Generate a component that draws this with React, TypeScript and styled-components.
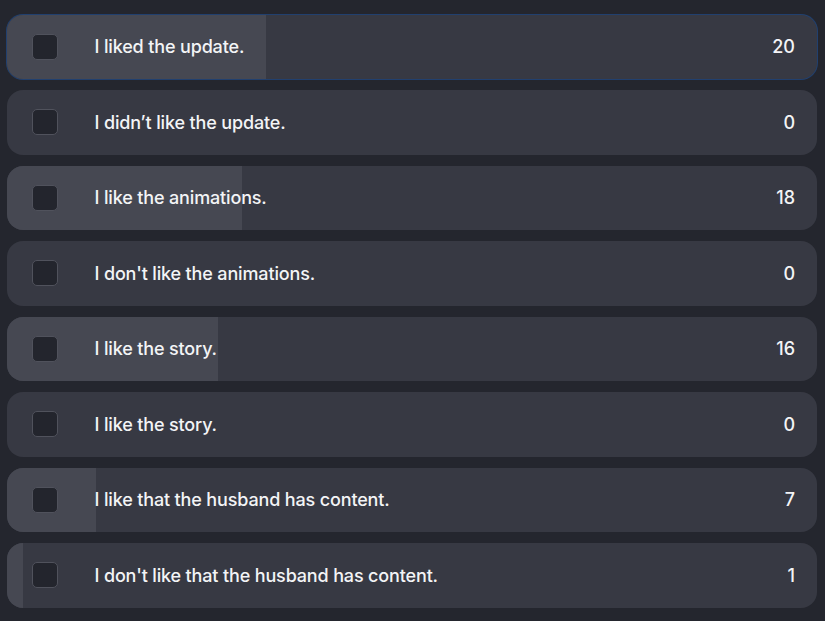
import React from "react";
import styled, { createGlobalStyle } from "styled-components";

const GlobalStyle = createGlobalStyle`
  html, body {
    margin: 0;
    padding: 0;
    background: #24262e;
  }
  body {
    font-family: Inter, "Noto Sans", sans-serif;
  }
`;

const Page = styled.div`
  width: 825px;
  height: 621px;
  box-sizing: border-box;
  padding: 14.5px 8px 0 7px;
  background: #24262e;
  display: flex;
  flex-direction: column;
  gap: 11px;
`;

const Row = styled.div<{ $active?: boolean }>`
  position: relative;
  height: 64.5px;
  border-radius: 16px;
  background: #373943;
  overflow: hidden;
  display: flex;
  align-items: center;
  padding: 0 22px 0 24.5px;
  box-shadow: ${(p) => (p.$active ? "0 0 0 1px #21406f" : "none")};
  flex-shrink: 0;
`;

const Fill = styled.div`
  position: absolute;
  left: 0;
  top: 0;
  bottom: 0;
  background: #464852;
`;

const Check = styled.div`
  position: relative;
  width: 24px;
  height: 24px;
  border: 1px solid #50525c;
  border-radius: 5px;
  background: #23252d;
  flex-shrink: 0;
`;

const Label = styled.span`
  position: relative;
  margin-left: 37px;
  flex: 1;
  color: #f3f4f6;
  font-size: 18px;
  font-weight: 500;
  letter-spacing: -0.15px;
`;

const Count = styled.span`
  position: relative;
  color: #f3f4f6;
  font-size: 18px;
  font-weight: 500;
`;

const options = [
  { text: "I liked the update.", votes: 20 },
  { text: "I didn\u2019t like the update.", votes: 0 },
  { text: "I like the animations.", votes: 18 },
  { text: "I don't like the animations.", votes: 0 },
  { text: "I like the story.", votes: 16 },
  { text: "I like the story.", votes: 0 },
  { text: "I like that the husband has content.", votes: 7 },
  { text: "I don't like that the husband has content.", votes: 1 },
];

const total = options.reduce((s, o) => s + o.votes, 0);

export default function App() {
  return (
    <>
      <GlobalStyle />
      <Page>
        {options.map((o, i) => {
          const pct = Math.round((o.votes / total) * 100);
          return (
            <Row key={i} $active={i === 0}>
              <Fill style={{ width: `${pct}%` }} />
              <Check />
              <Label>{o.text}</Label>
              <Count>{o.votes}</Count>
            </Row>
          );
        })}
      </Page>
    </>
  );
}
